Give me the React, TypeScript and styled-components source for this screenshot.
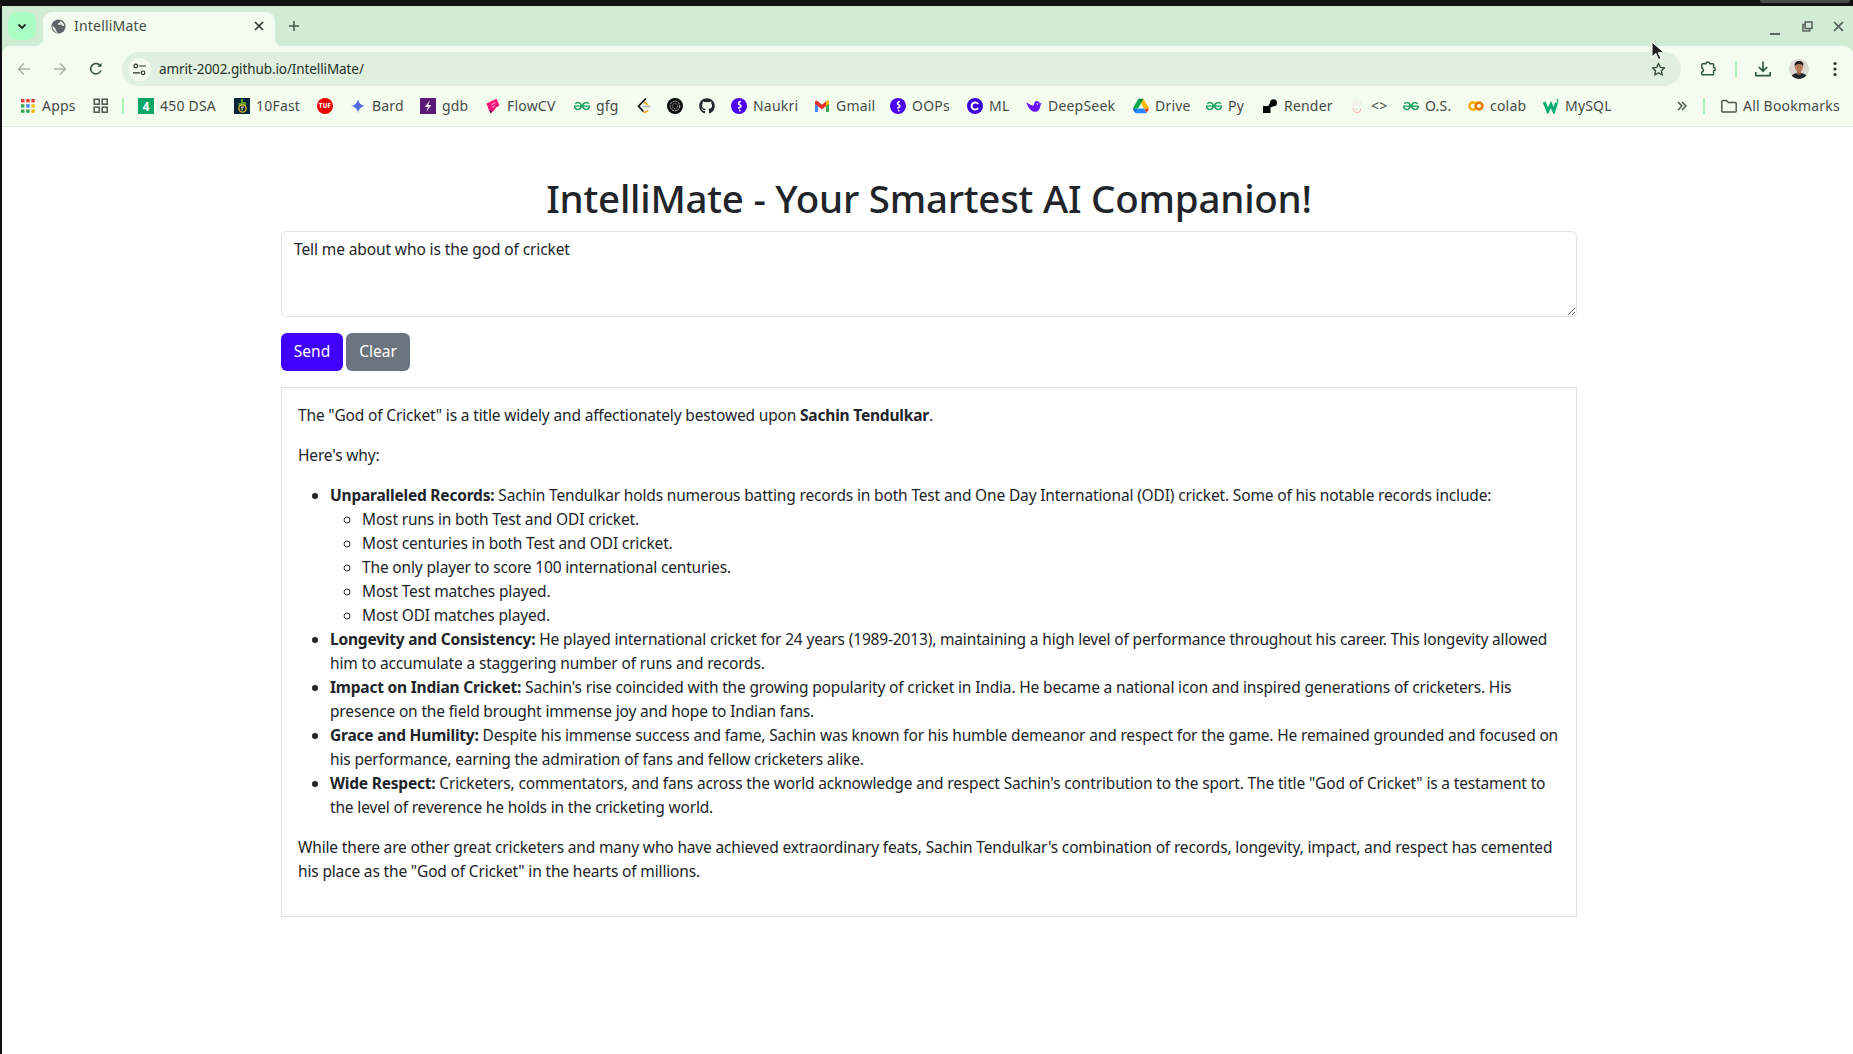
import React from 'react';
import styled, { createGlobalStyle } from 'styled-components';
import { FaGithub } from 'react-icons/fa';
import { SiGeeksforgeeks } from 'react-icons/si';

const FONT = `'Noto Sans', 'Open Sans', sans-serif`;

const GlobalStyle = createGlobalStyle`
  html, body {
    margin: 0;
    padding: 0;
    background: #111111;
  }
  body {
    font-family: ${FONT};
    overflow: hidden;
  }
`;

const Screen = styled.div`
  position: relative;
  width: 1853px;
  height: 1054px;
  padding-left: 2px;
  box-sizing: border-box;
  display: flex;
  flex-direction: column;
  overflow: hidden;
`;

const TopBar = styled.div`
  height: 6px;
  flex: none;
`;

const TopPill = styled.div`
  position: absolute;
  top: -3px;
  left: 1760px;
  width: 90px;
  height: 6px;
  border-radius: 3px;
  background: #4a4a4a;
`;

const Window = styled.div`
  flex: 1;
  display: flex;
  flex-direction: column;
  background: #d0edd3;
`;

const TabStrip = styled.div`
  height: 40px;
  flex: none;
  display: flex;
  align-items: flex-start;
  padding-top: 6px;
  box-sizing: border-box;
`;

const TabToggle = styled.div`
  width: 28px;
  height: 28px;
  margin-left: 6px;
  border-radius: 9px;
  background: #a9fdc5;
  display: flex;
  align-items: center;
  justify-content: center;
`;

const Tab = styled.div`
  position: relative;
  width: 232px;
  height: 34px;
  margin-left: 7px;
  padding: 0 11px 6px 8px;
  box-sizing: border-box;
  border-radius: 9px 9px 0 0;
  background: #f3fcee;
  display: flex;
  align-items: center;
  gap: 8px;

  &::before,
  &::after {
    content: '';
    position: absolute;
    bottom: 0;
    width: 8px;
    height: 8px;
  }
  &::before {
    left: -8px;
    background: radial-gradient(circle at 0 0, transparent 8px, #f3fcee 8.5px);
  }
  &::after {
    right: -8px;
    background: radial-gradient(circle at 100% 0, transparent 8px, #f3fcee 8.5px);
  }
`;

const TabTitle = styled.span`
  flex: 1;
  padding-bottom: 1px;
  font-size: 14px;
  letter-spacing: 0.2px;
  color: #474b48;
`;

const NewTab = styled.div`
  margin-left: 7px;
  width: 24px;
  height: 28px;
  display: flex;
  align-items: center;
  justify-content: center;
`;

const WindowControls = styled.div`
  margin-left: auto;
  height: 28px;
  display: flex;
  align-items: center;
  gap: 20.5px;
  padding-right: 9px;
`;

const Toolbar = styled.div`
  height: 44px;
  flex: none;
  background: #f3fcee;
  border-radius: 9px 9px 0 0;
  display: flex;
  align-items: flex-start;
  padding: 6px 0 4px 13px;
  box-sizing: border-box;
`;

const NavButton = styled.div`
  width: 18px;
  height: 34px;
  margin-right: 18px;
  flex: none;
  display: flex;
  align-items: center;
  justify-content: center;
`;

const AddressBar = styled.div`
  width: 1559px;
  height: 34px;
  flex: none;
  margin-left: -1px;
  border-radius: 17px;
  background: #dff0de;
  display: flex;
  align-items: center;
  padding: 0 15px 0 6px;
  box-sizing: border-box;
`;

const SiteInfo = styled.div`
  width: 23px;
  height: 23px;
  border-radius: 50%;
  background: #f3fcee;
  display: flex;
  align-items: center;
  justify-content: center;
  flex: none;
`;

const Url = styled.span`
  flex: 1;
  margin-left: 8px;
  font-size: 13.5px;
  letter-spacing: -0.1px;
  color: #26322a;
`;

const ToolIcons = styled.div`
  flex: none;
  display: flex;
  align-items: center;
  height: 34px;
`;

const ToolIcon = styled.div<{ $w: number }>`
  width: ${(p) => p.$w}px;
  flex: none;
  display: flex;
  align-items: center;
  justify-content: center;
`;

const Rule = styled.div`
  width: 2px;
  height: 16px;
  background: #a8f5b8;
  flex: none;
`;

const BookmarkBar = styled.div`
  height: 37px;
  flex: none;
  background: #f3fcee;
  border-bottom: 1px solid #dfe9dd;
  box-sizing: border-box;
  display: flex;
  align-items: flex-start;
  padding: 8px 12px 0 18px;
`;

const Bookmark = styled.div<{ $w: number }>`
  width: ${(p) => p.$w}px;
  height: 16px;
  flex: none;
  display: flex;
  align-items: center;
  gap: 6px;
  font-size: 14px;
  letter-spacing: 0.2px;
  color: #474b48;
  white-space: nowrap;

  svg {
    flex: none;
    display: block;
  }
`;

const BookmarkLabel = styled.span`
  padding-bottom: 2px;
`;

const BookmarkEnd = styled.div`
  margin-left: auto;
  display: flex;
  align-items: center;
  height: 16px;
`;

const Page = styled.main`
  flex: 1;
  background: #ffffff;
  padding: 47px 0 0 279px;
`;

const Container = styled.div`
  width: 1296px;
  font-size: 15.5px;
  line-height: 24px;
  color: #212529;
`;

const Title = styled.h1`
  margin: 0 0 9px;
  font-size: 38.5px;
  font-weight: 500;
  line-height: 48px;
  letter-spacing: -0.23px;
  text-align: center;
  color: #212529;
`;

const Prompt = styled.textarea`
  display: block;
  width: 100%;
  height: 86px;
  margin: 0 0 16px;
  padding: 5px 12px 7px;
  box-sizing: border-box;
  border: 1px solid #dee2e6;
  border-radius: 6px;
  outline: none;
  resize: vertical;
  font-family: ${FONT};
  font-size: 15.5px;
  line-height: 24px;
  letter-spacing: -0.11px;
  color: #212529;
  background: #ffffff;
`;

const Actions = styled.div`
  display: flex;
  gap: 3px;
  margin-bottom: 16px;
`;

const Button = styled.button<{ $primary?: boolean }>`
  width: ${(p) => (p.$primary ? 62 : 64)}px;
  height: 38px;
  border: 1px solid transparent;
  border-radius: 6px;
  padding: 0 0 2px;
  font-family: ${FONT};
  font-size: 15.5px;
  color: #ffffff;
  background: ${(p) => (p.$primary ? '#3f00ff' : '#6c757d')};
`;

const Response = styled.div`
  border: 1px solid #dee2e6;
  padding: 15px 16px 17px;
  letter-spacing: -0.16px;

  p {
    margin: 0 0 16px;
  }
  ul {
    margin: 0 0 16px;
    padding-left: 32px;
  }
  ul ul {
    margin: 0;
    list-style-type: circle;
  }
  b {
    font-weight: 700;
    letter-spacing: -0.2px;
  }
`;

const Cursor = styled.svg`
  position: absolute;
  left: 1651px;
  top: 41px;
`;

type IconProps = { size?: number; color?: string };

const ChevronDown = () => (
  <svg width="12" height="12" viewBox="0 0 12 12" fill="none" stroke="#1d2a20" strokeWidth="1.8">
    <path d="M2.5 4.5 6 8l3.5-3.5" />
  </svg>
);

const Globe = () => (
  <svg width="15" height="15" viewBox="0 0 16 16">
    <circle cx="8" cy="8" r="7.5" fill="#5f6368" />
    <path d="M1.5 7 5 10.500V12l2 2v.8C4 14.500 1.500 11 1.500 7Z" fill="#e8f0e4" />
    <path d="M11 2.600c1.800 1 3 2.800 3.200 4.900h-1.700L11 6H7.500V4.800l2-1V2.400Z" fill="#e8f0e4" />
  </svg>
);

const CloseX = ({ size = 10, color = '#2a2e2b' }: IconProps) => (
  <svg width={size} height={size} viewBox="0 0 10 10" fill="none" stroke={color} strokeWidth="1.6">
    <path d="M1 1l8 8M9 1 1 9" />
  </svg>
);

const Plus = () => (
  <svg width="12" height="12" viewBox="0 0 12 12" fill="none" stroke="#3c5745" strokeWidth="1.5">
    <path d="M6 1v10M1 6h10" />
  </svg>
);

const Minimize = () => (
  <svg width="11" height="12" viewBox="0 0 11 12" fill="#5c6660" style={{ marginTop: 8 }}>
    <rect x="0" y="9" width="10" height="2" />
  </svg>
);

const Restore = () => (
  <svg width="11" height="11" viewBox="0 0 11 11" fill="none" stroke="#5c6660" strokeWidth="1.6">
    <rect x="3.200" y="1" width="6.800" height="6.500" />
    <path d="M3 3.500H1V10h6.500V8" />
  </svg>
);

const Arrow = ({ flip, color }: { flip?: boolean; color: string }) => (
  <svg width="14" height="14" viewBox="0 0 14 14" fill="none" stroke={color} strokeWidth="1.5" style={flip ? { transform: 'scaleX(-1)' } : undefined}>
    <path d="M13 7H1.500M7 1.500 1.500 7 7 12.500" />
  </svg>
);

const Reload = () => (
  <svg width="14" height="14" viewBox="0 0 14 14" fill="none" stroke="#34503d" strokeWidth="1.5">
    <path d="M11.800 8.500A5.200 5.200 0 1 1 11 3.500" />
    <path d="M12.500 .8v4h-4z" fill="#34503d" stroke="none" />
  </svg>
);

const Tune = () => (
  <svg width="13" height="13" viewBox="0 0 13 13" fill="none" stroke="#26322a" strokeWidth="1.200">
    <circle cx="2.800" cy="3" r="1.800" />
    <path d="M6 3h7M0 9.800h7" />
    <circle cx="10" cy="9.800" r="1.800" />
  </svg>
);

const Star = () => (
  <svg width="15" height="15" viewBox="0 0 15 15" fill="none" stroke="#2e4536" strokeWidth="1.300">
    <path d="M7.500 1.300 9.300 5.300l4.300.5-3.200 2.900.9 4.300-3.800-2.200-3.800 2.200.9-4.300L1.400 5.800l4.300-.5z" strokeLinejoin="round" />
  </svg>
);

const Puzzle = () => (
  <svg width="18" height="18" viewBox="0 0 18 18" fill="none" stroke="#2f5a3f" strokeWidth="1.500">
    <path d="M3.500 3.800H7a1.800 1.800 0 0 1 3.600 0h3.200a.8.8 0 0 1 .8.8v3a1.600 1.600 0 0 1 0 3.200v3.200a.8.800 0 0 1-.8.800H3.600a.8.800 0 0 1-.8-.8V12a1.800 1.800 0 0 0 1-3.200 1.800 1.800 0 0 0-1-1V4.500a.8.800 0 0 1 .7-.7Z" strokeLinejoin="round" />
  </svg>
);

const Download = () => (
  <svg width="16" height="16" viewBox="0 0 16 16" fill="none" stroke="#2f5a3f" strokeWidth="1.700">
    <path d="M8 .5v9M3.800 6 8 10.200 12.200 6" />
    <path d="M.8 11v3.600h14.400V11" strokeLinejoin="round" />
  </svg>
);

const Avatar = () => (
  <svg width="20" height="20" viewBox="0 0 20 20">
    <defs>
      <clipPath id="avatar-clip">
        <circle cx="10" cy="10" r="10" />
      </clipPath>
    </defs>
    <g clipPath="url(#avatar-clip)">
      <rect width="20" height="20" fill="#ddd8d4" />
      <path d="M1 20c1-5 5-6 9-6s8 1 9 6z" fill="#1c242c" />
      <rect x="8" y="11" width="4" height="4.500" fill="#a5694f" />
      <ellipse cx="10" cy="8" rx="4" ry="4.800" fill="#b47a5c" />
      <path d="M5.800 7.500C5.200 3.500 7.500 2 10 2s5 1.200 4.200 5.500c-.6-2-2-2.600-4.200-2.600S6.500 5.500 5.800 7.500Z" fill="#1d1714" />
    </g>
  </svg>
);

const Dots = () => (
  <svg width="4" height="16" viewBox="0 0 4 16" fill="#26322a">
    <circle cx="2" cy="2.500" r="1.600" />
    <circle cx="2" cy="8" r="1.600" />
    <circle cx="2" cy="13.500" r="1.600" />
  </svg>
);

const AppsIcon = () => {
  const colors = ['#ea4335', '#ea4335', '#ea4335', '#34a853', '#4285f4', '#fbbc04', '#34a853', '#34a853', '#fbbc04'];
  return (
    <svg width="16" height="16" viewBox="0 0 16 16">
      {colors.map((c, i) => (
        <rect key={i} x={1 + (i % 3) * 5.200} y={1 + Math.floor(i / 3) * 5.200} width="3.400" height="3.400" fill={c} />
      ))}
    </svg>
  );
};

const TabsGrid = () => (
  <svg width="16" height="16" viewBox="0 0 16 16" fill="none" stroke="#4a534c" strokeWidth="1.500">
    <rect x="1.200" y="1.200" width="5" height="5" />
    <rect x="9.200" y="1.200" width="5" height="5" />
    <rect x="1.200" y="9.200" width="5" height="5" />
    <rect x="9.200" y="9.200" width="5" height="5" />
  </svg>
);

const Dsa = () => (
  <svg width="16" height="16" viewBox="0 0 16 16">
    <rect width="16" height="16" fill="#05a865" />
    <text x="8" y="12.500" fontSize="12" fontWeight="700" fontFamily="Noto Sans" textAnchor="middle" fill="#ffffff">4</text>
  </svg>
);

const TenFast = () => (
  <svg width="16" height="16" viewBox="0 0 16 16">
    <rect width="16" height="16" fill="#07283a" />
    <path d="M7 1h2v3h3v4H4.500V5H7z" fill="#58a02c" />
    <circle cx="8.500" cy="10.500" r="3.600" fill="#0c2a30" stroke="#e4b820" strokeWidth="1.300" />
    <path d="M7.500 9h2.500M8 9v3.500" stroke="#e8e8d8" strokeWidth="1" />
  </svg>
);

const Tuf = () => (
  <svg width="16" height="16" viewBox="0 0 16 16">
    <circle cx="8" cy="8" r="8" fill="#ea0000" />
    <text x="8" y="10.200" fontSize="6.200" fontWeight="800" fontFamily="Noto Sans" textAnchor="middle" fill="#ffffff">TUF</text>
  </svg>
);

const BardStar = () => (
  <svg width="16" height="16" viewBox="0 0 16 16">
    <defs>
      <linearGradient id="bard-g" x1="0" y1="1" x2="1" y2="0">
        <stop offset="0" stopColor="#3f8cf0" />
        <stop offset=".6" stopColor="#5a60e8" />
        <stop offset="1" stopColor="#b07ae8" />
      </linearGradient>
    </defs>
    <path d="M8 .8C8.500 5 11 7.500 15.200 8 11 8.500 8.500 11 8 15.200 7.500 11 5 8.500.8 8 5 7.500 7.500 5 8 .8Z" fill="url(#bard-g)" />
  </svg>
);

const Gdb = () => (
  <svg width="16" height="16" viewBox="0 0 16 16">
    <rect width="16" height="16" fill="#5b1a7a" />
    <path d="M9.800 2.500 4.800 9h3l-1.300 4.800L11.300 7h-3z" fill="#f4ecf6" />
  </svg>
);

const Flow = () => (
  <svg width="16" height="16" viewBox="0 0 16 16">
    <path d="M1.500 5.500 11.500 .8l3 7-3.500 1.700-1.500 2.500-3.800 3.200L3.500 11z" fill="#ff1478" />
    <path d="M5.700 15.500 4.200 12l3 1z" fill="#5a1050" />
    <path d="M6.500 6.500 10.500 4.800M7 9l3-1.200" stroke="#ffd0e4" strokeWidth=".9" />
  </svg>
);

const Gfg = () => <SiGeeksforgeeks size={16} color="#0f9d58" />;

const LeetCode = () => (
  <svg width="16" height="16" viewBox="0 0 16 16" fill="none" strokeWidth="1.700">
    <path d="M10 .5 2.500 8.200 7.500 13.500" stroke="#141414" />
    <path d="M7.300 13.700c1.500 1 3.200.6 5-1.200" stroke="#f5a623" />
    <path d="M8 4 12 7" stroke="#f5a623" />
    <path d="M6.500 8.500H14.500" stroke="#b9b9b9" />
  </svg>
);

const OpenAi = () => (
  <svg width="16" height="16" viewBox="0 0 16 16" fill="none">
    <circle cx="8" cy="8" r="8" fill="#0a0a0a" />
    <circle cx="8" cy="8" r="4.800" stroke="#c8c8c8" strokeWidth="1" strokeDasharray="2 .8" />
    <circle cx="8" cy="8" r="2.600" stroke="#a8a8a8" strokeWidth="1" strokeDasharray="1.200 .7" />
  </svg>
);

const Github = () => <FaGithub size={16} color="#24292e" />;

const Naukri = () => (
  <svg width="16" height="16" viewBox="0 0 16 16" fill="none">
    <circle cx="8" cy="8" r="8" fill="#4a00f5" />
    <path d="M9.200 3.500C7 4.800 7 6.200 9 7c1.800.8 1 2-1.200 3" stroke="#ffffff" strokeWidth="1.600" strokeLinecap="round" />
    <circle cx="8.800" cy="12.500" r=".9" fill="#ffffff" />
  </svg>
);

const Gmail = () => (
  <svg width="16" height="16" viewBox="0 0 16 16">
    <path d="M1 3.500h3V14H1z" fill="#4285f4" />
    <path d="M12 3.500h3V14h-3z" fill="#34a853" />
    <path d="M1 3.300 2.800 2.500 8 6.800l5.200-4.300 1.800.8V6l-7 5.200L1 6z" fill="#ea2f25" />
    <path d="M13 2.600 15 3.300V6l-3 2.200V3.500z" fill="#fbbc04" />
  </svg>
);

const Ml = () => (
  <svg width="16" height="16" viewBox="0 0 16 16" fill="none">
    <circle cx="8" cy="8" r="8" fill="#3a00dd" />
    <path d="M11.200 6A3.600 3.600 0 1 0 11.200 10" stroke="#ffffff" strokeWidth="2" />
  </svg>
);

const DeepSeek = () => (
  <svg width="16" height="16" viewBox="0 0 16 16">
    <path d="M.3 4.300C1.800 9 4.300 13.300 8.500 13.800c3.700.4 5.700-2.700 6-6.800L15.900 5l-2 .4C12.800 2.300 9.300 2.400 8.300 5c-.6 1.500.3 2.500-1 2.500C5.500 7.500 2.500 6 .3 4.300Z" fill="#6a14ff" />
    <circle cx="11.600" cy="6" r=".8" fill="#f3fcee" />
  </svg>
);

const Drive = () => (
  <svg width="16" height="16" viewBox="0 0 87.300 78">
    <path d="m6.600 66.850 3.850 6.650c.8 1.400 1.950 2.500 3.300 3.300l13.750-23.800h-27.500c0 1.550.4 3.100 1.200 4.500z" fill="#0066da" />
    <path d="m43.650 25-13.750-23.800c-1.350.8-2.500 1.900-3.300 3.300l-25.400 44a9.060 9.060 0 0 0 -1.200 4.500h27.500z" fill="#00ac47" />
    <path d="m73.550 76.800c1.350-.8 2.500-1.900 3.300-3.300l1.600-2.750 7.650-13.250c.8-1.400 1.200-2.950 1.200-4.500h-27.502l5.852 11.500z" fill="#ea4335" />
    <path d="m43.650 25 13.750-23.800c-1.350-.8-2.900-1.200-4.500-1.200h-18.500c-1.600 0-3.150.45-4.500 1.200z" fill="#00832d" />
    <path d="m59.800 53h-32.300l-13.750 23.800c1.350.8 2.900 1.200 4.500 1.200h50.800c1.600 0 3.150-.45 4.500-1.200z" fill="#2684fc" />
    <path d="m73.400 26.500-12.700-22c-.8-1.400-1.950-2.500-3.300-3.300l-13.750 23.800 16.150 28h27.450c0-1.550-.4-3.100-1.200-4.500z" fill="#ffba00" />
  </svg>
);

const RenderLogo = () => (
  <svg width="16" height="16" viewBox="0 0 16 16" fill="#000000">
    <rect x="1" y="8" width="7.500" height="7" />
    <circle cx="11.500" cy="4.800" r="3.500" />
    <path d="M6 8.500 9 3l3 5-3.500 1.500z" />
  </svg>
);

const Hand = () => (
  <svg width="16" height="16" viewBox="0 0 16 16" fill="none">
    <path d="M4 4v5M6.500 2v6M9 2v6M11.500 3.500v5" stroke="#f0ece6" strokeWidth="1.300" />
    <path d="M4 10c.5 3 2 4.500 4 4.500s3.500-1.500 3.500-4" stroke="#f0b8ae" strokeWidth="1.100" />
    <path d="M6 11.500h3" stroke="#f4cfc8" strokeWidth="1" />
  </svg>
);

const Colab = () => (
  <svg width="16" height="16" viewBox="0 0 16 16" fill="none" strokeWidth="2.700">
    <path d="M7.800 5.400a3.700 3.700 0 1 0 0 5.200" stroke="#f9ab00" />
    <circle cx="11" cy="8" r="3.400" stroke="#e87a00" />
  </svg>
);

const W3 = () => (
  <svg width="16" height="16" viewBox="0 0 16 16" fill="none">
    <path d="M1.200 4 4.800 13 8 6.500 10.800 13l2.700-8" stroke="#04aa6d" strokeWidth="3" />
    <path d="M13.500 1.500h1.500L14 3h1v1.500h-1.500" stroke="#04aa6d" strokeWidth=".8" />
  </svg>
);

const MoreChevrons = () => (
  <svg width="10" height="10" viewBox="0 0 10 10" fill="none" stroke="#3a4a3e" strokeWidth="1.300">
    <path d="M1 1l4 4-4 4M5 1l4 4-4 4" />
  </svg>
);

const Folder = () => (
  <svg width="16" height="16" viewBox="0 0 16 16" fill="none" stroke="#4a534c" strokeWidth="1.400">
    <path d="M.8 3.500a1 1 0 0 1 1-1h3.700L7.300 4.500h6.900a1 1 0 0 1 1 1v7.500a1 1 0 0 1-1 1H1.800a1 1 0 0 1-1-1Z" strokeLinejoin="round" />
  </svg>
);

const bookmarks: { icon: React.ReactNode; label?: string; w: number }[] = [
  { icon: <Dsa />, label: '450 DSA', w: 96 },
  { icon: <TenFast />, label: '10Fast', w: 83 },
  { icon: <Tuf />, w: 33 },
  { icon: <BardStar />, label: 'Bard', w: 70 },
  { icon: <Gdb />, label: 'gdb', w: 65 },
  { icon: <Flow />, label: 'FlowCV', w: 89 },
  { icon: <Gfg />, label: 'gfg', w: 62 },
  { icon: <LeetCode />, w: 31 },
  { icon: <OpenAi />, w: 32 },
  { icon: <Github />, w: 32 },
  { icon: <Naukri />, label: 'Naukri', w: 83 },
  { icon: <Gmail />, label: 'Gmail', w: 76 },
  { icon: <Naukri />, label: 'OOPs', w: 77 },
  { icon: <Ml />, label: 'ML', w: 59 },
  { icon: <DeepSeek />, label: 'DeepSeek', w: 107 },
  { icon: <Drive />, label: 'Drive', w: 73 },
  { icon: <Gfg />, label: 'Py', w: 56 },
  { icon: <RenderLogo />, label: 'Render', w: 87 },
  { icon: <Hand />, label: '<>', w: 54 },
  { icon: <Gfg />, label: 'O.S.', w: 65 },
  { icon: <Colab />, label: 'colab', w: 75 },
  { icon: <W3 />, label: 'MySQL', w: 100 },
];

const App = () => (
  <Screen>
    <GlobalStyle />
    <TopBar />
    <TopPill />
    <Window>
      <TabStrip>
        <TabToggle>
          <ChevronDown />
        </TabToggle>
        <Tab>
          <Globe />
          <TabTitle>IntelliMate</TabTitle>
          <CloseX />
        </Tab>
        <NewTab>
          <Plus />
        </NewTab>
        <WindowControls>
          <Minimize />
          <Restore />
          <CloseX size={11} color="#5c6660" />
        </WindowControls>
      </TabStrip>

      <Toolbar>
        <NavButton>
          <Arrow color="#aab3aa" />
        </NavButton>
        <NavButton>
          <Arrow flip color="#aab3aa" />
        </NavButton>
        <NavButton>
          <Reload />
        </NavButton>
        <AddressBar>
          <SiteInfo>
            <Tune />
          </SiteInfo>
          <Url>amrit-2002.github.io/IntelliMate/</Url>
          <Star />
        </AddressBar>
        <ToolIcons>
          <ToolIcon $w={54}>
            <Puzzle />
          </ToolIcon>
          <Rule />
          <ToolIcon $w={52}>
            <Download />
          </ToolIcon>
          <ToolIcon $w={20}>
            <Avatar />
          </ToolIcon>
          <ToolIcon $w={51}>
            <Dots />
          </ToolIcon>
        </ToolIcons>
      </Toolbar>

      <BookmarkBar>
        <Bookmark $w={73}>
          <AppsIcon />
          <BookmarkLabel>Apps</BookmarkLabel>
        </Bookmark>
        <Bookmark $w={29}>
          <TabsGrid />
        </Bookmark>
        <Bookmark $w={16}>
          <Rule />
        </Bookmark>
        {bookmarks.map((b, i) => (
          <Bookmark key={i} $w={b.w}>
            {b.icon}
            {b.label && <BookmarkLabel>{b.label}</BookmarkLabel>}
          </Bookmark>
        ))}
        <BookmarkEnd>
          <Bookmark $w={26}>
            <MoreChevrons />
          </Bookmark>
          <Bookmark $w={18}>
            <Rule />
          </Bookmark>
          <Bookmark $w={120}>
            <Folder />
            <BookmarkLabel>All Bookmarks</BookmarkLabel>
          </Bookmark>
        </BookmarkEnd>
      </BookmarkBar>

      <Page>
        <Container>
          <Title>IntelliMate - Your Smartest AI Companion!</Title>
          <Prompt readOnly rows={3} value="Tell me about who is the god of cricket" />
          <Actions>
            <Button $primary>Send</Button>
            <Button>Clear</Button>
          </Actions>
          <Response>
            <p>
              The "God of Cricket" is a title widely and affectionately bestowed upon <b>Sachin Tendulkar</b>.
            </p>
            <p>Here's why:</p>
            <ul>
              <li>
                <b>Unparalleled Records:</b> Sachin Tendulkar holds numerous batting records in both Test and One Day International (ODI) cricket. Some of his notable records include:
                <ul>
                  <li>Most runs in both Test and ODI cricket.</li>
                  <li>Most centuries in both Test and ODI cricket.</li>
                  <li>The only player to score 100 international centuries.</li>
                  <li>Most Test matches played.</li>
                  <li>Most ODI matches played.</li>
                </ul>
              </li>
              <li>
                <b>Longevity and Consistency:</b> He played international cricket for 24 years (1989-2013), maintaining a high level of performance throughout his career. This longevity allowed him to accumulate a staggering number of runs and records.
              </li>
              <li>
                <b>Impact on Indian Cricket:</b> Sachin's rise coincided with the growing popularity of cricket in India. He became a national icon and inspired generations of cricketers. His presence on the field brought immense joy and hope to Indian fans.
              </li>
              <li>
                <b>Grace and Humility:</b> Despite his immense success and fame, Sachin was known for his humble demeanor and respect for the game. He remained grounded and focused on his performance, earning the admiration of fans and fellow cricketers alike.
              </li>
              <li>
                <b>Wide Respect:</b> Cricketers, commentators, and fans across the world acknowledge and respect Sachin's contribution to the sport. The title "God of Cricket" is a testament to the level of reverence he holds in the cricketing world.
              </li>
            </ul>
            <p>
              While there are other great cricketers and many who have achieved extraordinary feats, Sachin Tendulkar's combination of records, longevity, impact, and respect has cemented his place as the "God of Cricket" in the hearts of millions.
            </p>
          </Response>
        </Container>
      </Page>
    </Window>
    <Cursor width="14" height="20" viewBox="0 0 14 20">
      <path d="M1 1v15l3.800-3.500 2.700 6 2.500-1-2.700-5.800H13z" fill="#1d1f20" stroke="#ffffff" strokeWidth="1" />
    </Cursor>
  </Screen>
);

export default App;
